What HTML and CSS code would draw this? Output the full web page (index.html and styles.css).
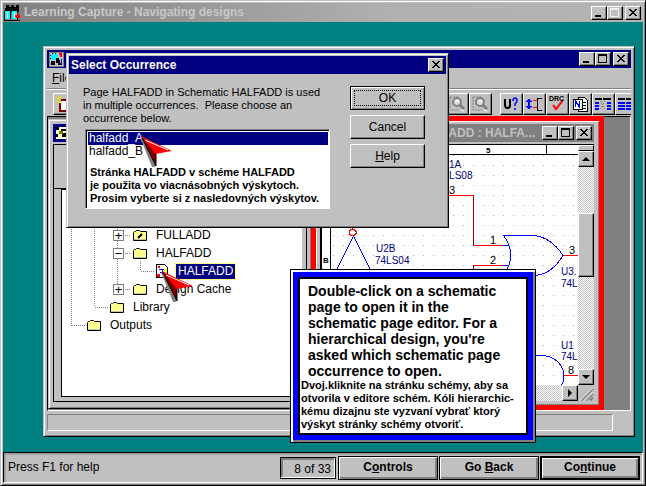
FILE: index.html
```html
<!DOCTYPE html>
<html lang="en">
<head>
<meta charset="utf-8">
<title>Learning Capture - Navigating designs</title>
<link rel="stylesheet" href="styles.css">
</head>
<body>
<svg class="defs" width="0" height="0" aria-hidden="true">
  <defs>
    <symbol id="min" viewBox="0 0 14 12"><path d="M3 8h6v2H3z"/></symbol>
    <symbol id="max" viewBox="0 0 14 12"><path fill-rule="evenodd" d="M2 1h9v9H2zM3 3v6h7V3z"/></symbol>
    <symbol id="close" viewBox="0 0 14 12"><path d="M3 2h2v1h1v1h2V3h1V2h2v1h-1v1H9v1H8v1h1v1h1v1h1v1H9V8H8V7H6v1H5v1H3V8h1V7h1V6h1V5H5V4H4V3H3z"/></symbol>
    <symbol id="folder" viewBox="0 0 16 13"><path d="M1.500 11.500V3.500l1-1h1l1-1h3l1 1h6v9z" fill="#ffff90" stroke="#000"/><path d="M2 10.500h12" stroke="#c0c0c0"/></symbol>
    <symbol id="arrow" viewBox="0 0 34 34"><path d="M0 1L12 31l3 0V18z" fill="#808080"/><path d="M2 1L16 30V18L31 15z" fill="#f00"/><path d="M2 1l14 17v12z" fill="#800000"/><path d="M2 2l14 28v-12" fill="none" stroke="#000"/><path d="M2 1l29 14" stroke="#f00" stroke-width="1"/><path d="M5 4l23 10" stroke="#fff" stroke-width="1"/></symbol>
    <symbol id="lens" viewBox="0 0 18 18"><path d="M2 2v13h9M2 2h8" fill="none" stroke="#808080" stroke-dasharray="2 1"/><circle cx="9" cy="7" r="4" fill="#ddd" stroke="#808080" stroke-width="2"/><path d="M12 10l4 4" stroke="#808080" stroke-width="3"/><path d="M8 6h3M13 15l3 1" stroke="#fff"/></symbol>
  </defs>
</svg>
<div class="app">
  <header class="titlebar titlebar-app">
    <svg class="app-icon" viewBox="0 0 18 17" width="18" height="17" shape-rendering="crispEdges"><path d="M2 1h3v2h2V1h3v2h2V1h3v7H1V4h1z" fill="#000"/><path d="M1 7h6v8H1z" fill="#0ff"/><path d="M8 7h5v8H8z" fill="#0ff"/><path d="M0 7h1v9h15v1H0zM5 7h1v8h1V7h1M13 7h1v9h-1z" fill="#000"/><path d="M3 8v6M10 8v6" stroke="#fff"/><path d="M11 11h2V9h2v2h1v3h-4v-1h-1z" fill="#f00"/></svg>
    <span>Learning Capture - Navigating designs</span>
    <div class="controls">
      <button aria-label="Minimize"><svg><use href="#min"/></svg></button><button aria-label="Maximize" disabled><svg><use href="#max"/></svg></button><button class="gap" aria-label="Close"><svg><use href="#close"/></svg></button>
    </div>
  </header>

  <main class="desktop">
    <section class="capture">
      <header class="titlebar">
        <svg class="app-icon" viewBox="0 0 15 15" width="15" height="15" shape-rendering="crispEdges"><rect width="15" height="15" fill="#808080"/><path d="M1 1h13v13H1z" fill="#c0c0c0"/><path d="M2 2h7v6H2z" fill="#0ff"/><path d="M1 3h1v1H1zM1 6h1v1H1zM3 1h1v1H3zM6 1h1v1H6zM7 6h3v2h1v3h2v2h-4v-2H7zM2 9h4v4H2z" fill="#000"/><path d="M10 1h3v4h-2V3h-1z" fill="#f00"/><path d="M12 7h1v6h-1z" fill="#00f"/></svg>
        <div class="controls">
          <button aria-label="Minimize"><svg><use href="#min"/></svg></button><button aria-label="Maximize"><svg><use href="#max"/></svg></button><button class="gap" aria-label="Close"><svg><use href="#close"/></svg></button>
        </div>
      </header>
      <nav class="menu"><a href="#"><u>F</u>ile</a></nav>
      <div class="toolbar">
        <button aria-label="New"><svg viewBox="0 0 18 18" shape-rendering="crispEdges"><path d="M6 5h8v11H5V8" fill="#fff" stroke="#800000" stroke-width="2"/><path d="M0 1l7 7M7 1L0 8M3 0v9" stroke="#e8e000" stroke-width="1"/></svg></button>
        <button class="push" aria-label="Zoom to all" disabled><svg><use href="#lens"/></svg></button>
        <button aria-label="Zoom area" disabled><svg><use href="#lens"/></svg></button>
        <button class="apart" aria-label="Annotate"><svg viewBox="0 0 18 18"><path d="M3 4v6q0 3 2.500 3T8 10V4" fill="none" stroke="#000" stroke-width="2"/><path d="M11 6q0-3 2-3t2 3q0 1-2 3v2M13 13v2" fill="none" stroke="#00f" stroke-width="1.500"/></svg></button>
        <button aria-label="Back annotate"><svg viewBox="0 0 18 18" shape-rendering="crispEdges"><path d="M4 4v10" stroke="#00f" stroke-width="2"/><path d="M1 7l3-4 3 4zM1 11l3 4 3-4z" fill="#00f"/><path d="M17 3h-5v12h5" fill="none" stroke="#000" stroke-width="1"/><path d="M8 5h4M8 12h4" stroke="#f00"/></svg></button>
        <button aria-label="Design rules check"><svg viewBox="0 0 18 18"><path d="M5 10l3 4 7-9" fill="none" stroke="#f00" stroke-width="2"/><text x="1" y="6" class="drc">DRC</text></svg></button>
        <button aria-label="Create netlist"><svg viewBox="0 0 18 18" shape-rendering="crispEdges"><path d="M7 2h6l3 3v11H7z" fill="#fff" stroke="#000"/><path d="M2 4h9v10H2z" fill="#fff" stroke="#000"/><path d="M4.500 12V6l4 6V6" fill="none" stroke="#00f" stroke-width="1.500"/><path d="M12 7h3M12 10h3M12 13h3" stroke="#000"/></svg></button>
        <button aria-label="Cross reference"><svg viewBox="0 0 18 18" shape-rendering="crispEdges"><path d="M1 4h7M9 4h8" stroke="#000" stroke-width="2"/><path d="M1 7.500h4M1 10.500h4M1 13.500h4M13 7.500h4M13 10.500h4M13 13.500h4" stroke="#00f" stroke-width="2"/><path d="M6 6l5 9M11 6l-5 9" stroke="#808080" stroke-dasharray="1 1"/></svg></button>
        <button class="cut" aria-label="Bill of materials"><svg viewBox="0 0 18 18" shape-rendering="crispEdges"><path d="M1 4h7M9 4h8" stroke="#000" stroke-width="2"/><path d="M1 7.500h7M1 10.500h7M1 13.500h7M9 7.500h8M9 10.500h8M9 13.500h8" stroke="#00f" stroke-width="2"/></svg></button>
      </div>

      <div class="mdi">
        <section class="project">
          <header class="titlebar"><svg class="app-icon" viewBox="0 0 14 14" width="14" height="14" shape-rendering="crispEdges"><path d="M1 1h12v12H1z" fill="#ffc"/><path d="M1 1h3v3H1zM1 8h2v3H1zM6 3h6v2H6zM7 7h4v4H7z" fill="#000"/><path d="M4 5h4v3H4z" fill="#808000"/></svg></header>
          <div class="tab-strip"></div>
          <div class="tree">
            <svg class="branches" width="110" height="145" shape-rendering="crispEdges" fill="none" stroke="#808080" stroke-dasharray="1 1"><path d="M10.500 0v137M10.500 136.500h13M33.500 0v118M33.500 118.500h13M56.500 0v100M62 46.500h7M62 64.500h7M62 100.500h7M79.500 72v10M79.500 82.500h13"/></svg>
            <ul>
              <li class="depth-3"><button class="node">+</button><svg class="folder" viewBox="0 0 16 13"><use href="#folder"/><path d="M6 9l4-4" stroke="#000" stroke-width="2"/></svg><span>FULLADD</span></li>
              <li class="depth-3"><button class="node">−</button><svg class="folder"><use href="#folder"/></svg><span>HALFADD</span></li>
              <li class="depth-4"><svg viewBox="0 0 12 14" width="12" height="14" shape-rendering="crispEdges"><path d="M.5.500h8l3 3v10H.500z" fill="#fff" stroke="#000"/><path d="M2 2l2 2M4 2l-2 2" stroke="#f00"/><path d="M3 5h5M4 8h4M6 5v6" stroke="#00f"/><path d="M8 5h3v6H8z" fill="#ff0"/><path d="M1 10h3v3H1z" fill="#f00"/></svg><span class="picked">HALFADD</span></li>
              <li class="depth-3"><button class="node">+</button><svg class="folder"><use href="#folder"/></svg><span>Design Cache</span></li>
              <li class="depth-2"><svg class="folder"><use href="#folder"/></svg><span>Library</span></li>
              <li class="depth-1"><svg class="folder"><use href="#folder"/></svg><span>Outputs</span></li>
            </ul>
          </div>
        </section>

        <section class="schematic">
          <header class="titlebar titlebar-idle">
            <span>HALFADD : HALFA...</span>
            <div class="controls">
              <button aria-label="Minimize"><svg><use href="#min"/></svg></button><button aria-label="Maximize"><svg><use href="#max"/></svg></button><button class="gap" aria-label="Close"><svg><use href="#close"/></svg></button>
            </div>
          </header>
          <div class="sheet">
            <svg class="drawing" viewBox="322 145 256 242" preserveAspectRatio="xMinYMin slice" shape-rendering="crispEdges">
              <defs><pattern id="dots" x="323" y="145" width="10" height="10" patternUnits="userSpaceOnUse"><rect width="1" height="1" fill="#b0b0b0"/></pattern></defs>
              <rect x="322" y="145" width="256" height="242" fill="#fff"/>
              <rect x="331" y="155" width="247" height="232" fill="url(#dots)"/>
              <path d="M330.500 145v242M322 154.500h256M546.500 145v9" stroke="#000" fill="none"/>
              <text x="486" y="153" class="mark">5</text><text x="323" y="263" class="mark">B</text>
              <g fill="none" stroke="#f00"><path d="M449 195.500h24M473 245.500h30M473 265.500h30M563 255.500h15M564 375.500h14M352.500 226v4"/><path d="M351 229.500h3l2 2v2l-2 2h-3l-2-2v-2z"/><path d="M473.500 195v50M473.500 265v20" stroke="#a00000"/></g>
              <g fill="none" stroke="#00f"><path d="M503.500 235.500h30Q551 237 563 255.500 552 274 535 275.500H503.500Q518 255 503.500 235.500M503 245.500h6M503 265.500h6M353.500 236l-17 34M353.500 236l17 34M535 355.500h8Q558 357 563 370 566 380 560 387"/></g>
              <g class="label"><text x="449" y="168">1A</text><text x="438" y="179">74LS08</text><text x="376" y="252">U2B</text><text x="375" y="264">74LS04</text><text x="561" y="275">U3.</text><text x="561" y="287">74L</text><text x="561" y="349">U1</text><text x="561" y="360">74L</text></g>
              <g class="pin"><text x="449" y="194">3</text><text x="490" y="244">1</text><text x="490" y="264">2</text><text x="569" y="254">3</text><text x="568" y="374">8</text></g>
            </svg>
            <div class="bar bar-v"><i class="splitter"></i><button class="step" aria-label="Scroll up"><svg viewBox="0 0 12 12"><path d="M6 4l4 4H2z"/></svg></button><i class="thumb"></i><button class="step" aria-label="Scroll down"><svg viewBox="0 0 12 12"><path d="M6 8l4-4H2z"/></svg></button></div>
            <div class="bar bar-h"><button class="step" aria-label="Scroll right"><svg viewBox="0 0 12 12"><path d="M8 6L4 2v8z"/></svg></button></div>
            <svg class="grip" viewBox="0 0 16 15"><path d="M3 15L15 3M8 15l7-7M12 15l3-3" stroke="#808080" stroke-width="2"/><path d="M2 15L15 2M7 15l8-8" stroke="#fff"/></svg>
          </div>
        </section>
      </div>
      <footer class="capture-status"><span></span></footer>
    </section>

    <section class="dialog" role="dialog" aria-labelledby="dialog-title">
      <header class="titlebar"><span id="dialog-title">Select Occurrence</span>
        <div class="controls"><button aria-label="Close"><svg><use href="#close"/></svg></button></div>
      </header>
      <div class="dialog-body">
        <div class="question">
          <p>Page HALFADD in Schematic HALFADD is used<br>in multiple occurrences.&nbsp; Please choose an<br>occurrence below.</p>
          <div class="list">
            <ul><li class="chosen">halfadd_A</li><li>halfadd_B</li></ul>
            <p class="note">Stránka HALFADD v schéme HALFADD<br>je použita vo viacnásobných výskytoch.<br>Prosim vyberte si z nasledovných výskytov.</p>
          </div>
        </div>
        <div class="actions">
          <button class="default">OK</button><button>Cancel</button><button><u>H</u>elp</button>
        </div>
      </div>
    </section>

    <svg class="pointer pointer-list"><use href="#arrow"/></svg>
    <svg class="pointer pointer-tree"><use href="#arrow"/></svg>

    <aside class="callout">
      <p class="lesson">Double-click on a schematic<br>page to open it in the<br>schematic page editor. For a<br>hierarchical design, you're<br>asked which schematic page<br>occurrence to open.</p>
      <p class="translation">Dvoj.kliknite na stránku schémy, aby sa<br>otvorila v editore schém. Kóli hierarchic-<br>kému dizajnu ste vyzvaní vybrať ktorý<br>výskyt stránky schémy otvoriť.</p>
    </aside>
  </main>

  <footer class="lesson-bar">
    <span class="hint">Press F1 for help</span>
    <span class="page">8 of 33</span>
    <button>C<u>o</u>ntrols</button><button>Go <u>B</u>ack</button><button class="default">Co<u>n</u>tinue</button>
  </footer>
</div>
</body>
</html>
```
FILE: styles.css
```css
* { box-sizing: border-box; margin: 0; padding: 0; }
body { font: 11px/13px "Liberation Sans", Arial, sans-serif; color: #000; background: #c0c0c0; }
.defs { position: absolute; }
ul { list-style: none; }
button { font: inherit; color: inherit; background: #c0c0c0; border: 1px solid; border-color: #fff #000 #000 #fff; box-shadow: inset -1px -1px #808080; }
a { color: inherit; text-decoration: none; }

.app { display: flex; flex-direction: column; height: 100vh; border: 1px solid; border-color: #c0c0c0 #000 #000 #c0c0c0; box-shadow: inset 1px 1px #fff, inset -1px -1px #808080; padding: 2px; background: #c0c0c0; }

.titlebar { display: flex; align-items: center; height: 18px; background: #000080; color: #fff; font-size: 12px; font-weight: bold; padding: 0 2px; flex: none; white-space: nowrap; }
.titlebar-app { height: 19px; color: #c8c8c8; background: linear-gradient(90deg, #808080, #b0b0b0 60%, #b4b4b4); padding: 0 2px 0 1px; gap: 2px; }
.titlebar-idle { background: #808080; color: #c0c0c0; justify-content: flex-end; }
.titlebar-idle .controls { margin-left: 7px; }
.controls { display: flex; margin-left: auto; }
.controls button { width: 16px; height: 14px; display: block; }
.controls .gap { margin-left: 2px; }
.controls svg { display: block; width: 14px; height: 12px; shape-rendering: crispEdges; }
.controls button:disabled svg { fill: #eee; }
.app-icon { display: block; flex: none; }

.desktop { position: relative; flex: 1; min-height: 0; background: #008080; overflow: hidden; }

.capture { position: absolute; left: 40px; right: 8px; top: 24px; bottom: 15px; display: flex; flex-direction: column; background: #c0c0c0; border: 1px solid; border-color: #c0c0c0 #000 #000 #c0c0c0; box-shadow: inset 1px 1px #fff, inset -1px -1px #808080; padding: 3px; }
.menu { height: 20px; padding: 4px 5px; font-size: 12px; flex: none; }
.toolbar { display: flex; height: 28px; flex: none; border-top: 1px solid #808080; box-shadow: inset 0 1px #fff; padding: 4px 0 0 6px; overflow: hidden; }
.toolbar button { width: 23px; height: 22px; flex: none; padding: 1px; }
.toolbar svg { display: block; width: 18px; height: 18px; }
.toolbar .push { margin-left: auto; }
.toolbar .apart { margin-left: 8px; }
.toolbar .cut { width: 16px; border-right: 0; box-shadow: none; overflow: hidden; }
.drc { font: bold 7px "Liberation Sans", sans-serif; }

.mdi { position: relative; flex: 1; min-height: 0; background: #808080; border: 1px solid; border-color: #000 #fff #fff #000; }
.project { position: absolute; left: 0; top: 2px; bottom: 1px; width: 264px; background: #c0c0c0; border: 1px solid; border-color: #c0c0c0 #000 #000 #c0c0c0; box-shadow: inset 1px 1px #fff, inset -1px -1px #808080; padding: 4px; display: flex; flex-direction: column; }
.tab-strip { height: 45px; flex: none; border: 1px solid #000; border-bottom: 0; margin-top: 2px; }
.tree { position: relative; flex: 1; background: #fff; border: solid #c0c0c0; border-width: 0 4px 4px 7px; outline: 1px solid #000; margin: 0 1px 3px; box-shadow: inset 1px 1px #000, inset 0 -1px #000; padding: 37px 0 0 1px; }
.branches { position: absolute; left: 0; top: 0; }
.tree li { position: relative; display: flex; align-items: center; height: 18px; font-size: 12px; }
.tree span { padding: 1px 2px; margin-left: 6px; }
.tree .picked { background: #000080; color: #fff; outline: 1px dotted #ff0; margin-left: 8px; }
.folder { width: 16px; height: 13px; flex: none; }
.node { width: 11px; height: 11px; margin-right: 8px; background: #fff; border: 1px solid #808080; box-shadow: none; line-height: 9px; font-size: 13px; flex: none; display: grid; place-content: center; }
.depth-1 { padding-left: 24px; }
.depth-2 { padding-left: 47px; }
.depth-3 { padding-left: 51px; }
.depth-4 { padding-left: 94px; }

.schematic { position: absolute; left: 263px; right: 26px; top: -1px; bottom: 0; border: 5px solid #f00; background: #c0c0c0; box-shadow: inset 1px 1px #fff, inset -1px -1px #808080; padding: 3px 5px 4px 4px; display: flex; flex-direction: column; }
.sheet { flex: 1; min-height: 0; margin-top: 2px; display: grid; grid-template-columns: 1fr 16px; grid-template-rows: 1fr 16px; border: solid #000; border-width: 1px 0 0 2px; }
.drawing { width: 100%; height: 100%; min-height: 0; min-width: 0; }
.label { font-size: 10px; fill: #000080; }
.pin { font-size: 11px; }
.mark { font: bold 8px "Liberation Sans", sans-serif; }
.bar { display: flex; background: repeating-conic-gradient(#c0c0c0 0 25%, #fff 0 50%) 0 0 / 2px 2px; }
.bar-v { flex-direction: column; }
.bar-h { justify-content: flex-end; }
.step { width: 16px; height: 16px; padding: 1px; flex: none; }
.step svg { display: block; width: 12px; height: 12px; }
.splitter { height: 6px; flex: none; background: #c0c0c0; border: 1px solid; border-color: #fff #000 #000 #fff; }
.thumb { height: 64px; margin: 46px 0 auto; background: #c0c0c0; border: 1px solid; border-color: #fff #000 #000 #fff; box-shadow: inset -1px -1px #808080; }
.grip { width: 16px; height: 16px; }

.capture-status { height: 22px; flex: none; padding: 3px 18px 2px 0; display: flex; }
.capture-status span { flex: 1; border: 1px solid; border-color: #808080 #fff #fff #808080; }

.dialog { position: absolute; left: 63px; top: 31px; width: 383px; background: #c0c0c0; border: 1px solid; border-color: #c0c0c0 #000 #000 #c0c0c0; box-shadow: inset 1px 1px #fff, inset -1px -1px #808080; padding: 2px; }
.dialog-body { display: flex; gap: 20px; padding: 12px 21px 16px 14px; }
.question { flex: 1; white-space: nowrap; }
.list { margin: 4px 0 0 2px; background: #fff; border: 1px solid; border-color: #808080 #fff #fff #808080; outline: 1px solid #c0c0c0; box-shadow: inset 1px 1px #000; padding: 2px 1px 3px 2px; }
.list li { height: 13px; padding-left: 1px; font-size: 12px; }
.chosen { background: #000080; color: #fff; }
.note { font-weight: bold; padding: 8px 0 0 2px; }
.actions { display: flex; flex-direction: column; gap: 5px; width: 75px; font-size: 12px; }
.actions button { height: 24px; }
.actions .default { outline: 1px dotted #000; outline-offset: -5px; border-color: #000; box-shadow: inset 1px 1px #fff, inset -1px -1px #808080; }

.pointer { position: absolute; width: 34px; height: 34px; }
.pointer-list { left: 137px; top: 114px; }
.pointer-tree { left: 158px; top: 249px; }

.callout { position: absolute; left: 287px; top: 247px; width: 246px; background: #fff; border: 1px solid #000; box-shadow: inset 2px 2px #fff, inset -2px -2px #808080; padding: 2px; }
.lesson, .translation { border: solid #00f; font-weight: bold; white-space: nowrap; }
.lesson { border-width: 5px 5px 0; box-shadow: inset 2px 2px #000, inset -2px 0 #000; padding: 6px 0 0 10px; font-size: 14px; line-height: 16px; }
.translation { border-width: 0 5px 5px; box-shadow: inset 2px 0 #000, inset -2px -2px #000; padding: 0 0 4px 3px; }

.lesson-bar { display: flex; align-items: center; height: 31px; flex: none; border: 1px solid; border-color: #000 #fff #fff #000; box-shadow: inset 2px 2px #a0a0a0; padding: 2px 2px 2px 4px; gap: 1px; font-size: 12px; }
.hint { flex: 1; }
.page { width: 56px; height: 22px; border: 1px solid #000; box-shadow: inset -1px -1px #fff, inset 2px 2px #808080; line-height: 22px; text-align: right; padding-right: 4px; margin-right: 1px; }
.lesson-bar button { width: 100px; height: 24px; font-weight: bold; border-color: #000; box-shadow: inset 1px 1px #fff, inset -2px -2px #808080; }
.lesson-bar .default { border-width: 2px; }
```
